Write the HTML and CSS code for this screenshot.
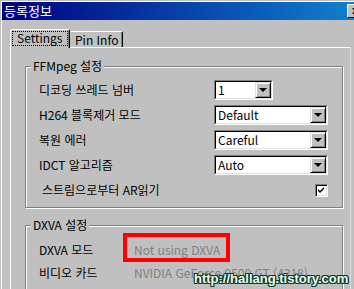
FILE: index.html
```html
<!DOCTYPE html>
<html lang="ko">
<head>
  <meta charset="UTF-8" />
  <title>등록정보</title>
  <link rel="stylesheet" href="styles.css">
</head>
<body>
  <div class="window">
    <div class="titlebar">
      <span class="title">등록정보</span>
      <span class="close">x</span>
    </div>

    <div class="content">
      <div class="tabs">
        <div class="tab active"><span class="focus">Settings</span></div>
        <div class="tab">Pin Info</div>
      </div>

      <div class="panel">
        <fieldset class="group">
          <legend>FFMpeg 설정</legend>
          <div class="rows">
            <div class="label">디코딩 쓰레드 넘버</div>
            <div class="combo short"><div class="combo-in"><span class="val">1</span><span class="drop"></span></div></div>

            <div class="label">H264 블록제거 모드</div>
            <div class="combo"><div class="combo-in"><span class="val">Default</span><span class="drop"></span></div></div>

            <div class="label">복원 에러</div>
            <div class="combo"><div class="combo-in"><span class="val">Careful</span><span class="drop"></span></div></div>

            <div class="label">IDCT 알고리즘</div>
            <div class="combo"><div class="combo-in"><span class="val">Auto</span><span class="drop"></span></div></div>

            <div class="label indent">스트림으로부터 AR읽기</div>
            <div class="check">
              <svg width="7" height="7" viewBox="0 0 7 7"><path d="M0 2 L2 4 L6 0 L6 2 L2 6 L0 4 Z" fill="#000"/></svg>
            </div>
          </div>
        </fieldset>

        <fieldset class="group dxva">
          <legend>DXVA 설정</legend>
          <div class="rows info">
            <div class="label">DXVA 모드</div>
            <div class="value">Not using DXVA</div>
            <div class="label">비디오 카드</div>
            <div class="value">NVIDIA GeForce 9500 GT (4318)</div>
          </div>
        </fieldset>
      </div>
    </div>
  </div>

  <!-- annotation overlays -->
  <div class="mark"></div>
  <div class="watermark">http://hallang.tistory.com</div>
</body>
</html>
```

FILE: styles.css
```css
html, body {
  margin: 0;
  padding: 0;
  background: #c0c0c0;
  width: 354px;
  height: 289px;
  overflow: hidden;
  font-family: "Noto Sans CJK KR", "Liberation Sans", sans-serif;
  font-size: 12px;
  color: #000;
}

.window {
  margin: 1px 0 0 1px;
  width: 363px;
  border-left: 1px solid #fff;
  border-top: 1px solid #fff;
}

.titlebar {
  display: flex;
  align-items: center;
  height: 18px;
  padding-left: 2px;
  background: linear-gradient(to right, #000080, #1084d0);
}

.title {
  color: #fff;
  font-size: 13px;
  line-height: 18px;
}

.close {
  margin-left: auto;
  margin-right: 2px;
  width: 14px;
  height: 12px;
  background: #c0c0c0;
  border: 1px solid;
  border-color: #fff #000 #000 #fff;
  font: bold 11px/11px "Liberation Sans", sans-serif;
  text-align: center;
}

.content {
  padding: 9px 0 0 8px;
}

.tabs {
  display: flex;
  align-items: flex-end;
  height: 18px;
}

.tab {
  box-sizing: border-box;
  width: 53px;
  height: 16px;
  padding: 0 0 0 5px;
  line-height: 15px;
  white-space: nowrap;
  border-top: 1px solid #fff;
  border-right: 1px solid #000;
  border-radius: 2px 2px 0 0;
  box-shadow: inset -1px 0 0 #808080;
}

.tab.active {
  position: relative;
  z-index: 1;
  width: 60px;
  height: 19px;
  margin-bottom: -1px;
  padding: 1px 1px 0 1px;
  border-left: 1px solid #fff;
  background: #c0c0c0;
}

.focus {
  display: block;
  height: 15px;
  line-height: 14px;
  padding-left: 5px;
  outline: 1px dotted #000;
  outline-offset: -1px;
}

.panel {
  width: 341px;
  height: 242px;
  overflow: hidden;
  padding: 11px 0 0 14px;
  border-top: 1px solid #fff;
  border-left: 1px solid #fff;
  border-right: 1px solid #dcdcdc;
  box-sizing: border-box;
}

.group {
  margin: 0;
  width: 318px;
  box-sizing: border-box;
  padding: 7px 0 7px 5px;
  border: 1px solid #808080;
  box-shadow: 1px 1px 0 #fff, inset 1px 1px 0 #fff;
}

.group legend {
  padding: 0 2px;
  line-height: 14px;
  background: #c0c0c0;
}

.dxva {
  margin-top: 10px;
  padding-top: 8px;
  height: 80px;
}

.rows {
  display: grid;
  grid-template-columns: 175px 114px;
  row-gap: 5px;
  align-items: center;
  padding-left: 8px;
}

.rows.info {
  grid-template-columns: 95px auto;
  row-gap: 3px;
}

.label {
  line-height: 20px;
  white-space: nowrap;
}

.label.indent {
  padding-left: 3px;
}

.value {
  line-height: 20px;
  color: #808080;
  white-space: nowrap;
}

.combo {
  box-sizing: border-box;
  width: 114px;
  height: 20px;
  border: 1px solid;
  border-color: #808080 #fff #fff #808080;
}

.combo.short {
  width: 59px;
}

.combo-in {
  display: flex;
  align-items: center;
  height: 100%;
  box-sizing: border-box;
  border: 1px solid;
  border-color: #000 #dfdfdf #dfdfdf #000;
  background: #fff;
}

.val {
  flex: 1;
  padding-left: 2px;
  line-height: 16px;
}

.drop {
  position: relative;
  box-sizing: border-box;
  width: 16px;
  height: 16px;
  background: #c0c0c0;
  border: 1px solid;
  border-color: #dfdfdf #000 #000 #dfdfdf;
  box-shadow: inset 1px 1px 0 #fff, inset -1px -1px 0 #808080;
}

.drop::after {
  content: "";
  position: absolute;
  left: 3px;
  top: 5px;
  border-left: 4px solid transparent;
  border-right: 4px solid transparent;
  border-top: 4px solid #000;
}

.check {
  justify-self: end;
  display: flex;
  align-items: center;
  justify-content: center;
  box-sizing: border-box;
  width: 13px;
  height: 13px;
  background: #fff;
  border: 1px solid;
  border-color: #808080 #fff #fff #808080;
  box-shadow: inset 1px 1px 0 #000, inset -1px -1px 0 #dfdfdf;
}

.mark {
  position: absolute;
  left: 123px;
  top: 233px;
  width: 99px;
  height: 21px;
  border: 4px solid #ff0000;
}

.watermark {
  position: absolute;
  left: 194px;
  top: 270px;
  font: bold 13px/17px "Liberation Sans", sans-serif;
  color: #eefff2;
  text-shadow:
    1px 0 0 #0b3a28, -1px 0 0 #0b3a28, 0 1px 0 #0b3a28, 0 -1px 0 #0b3a28,
    1px 1px 0 #0b3a28, -1px -1px 0 #0b3a28, 1px -1px 0 #0b3a28, -1px 1px 0 #0b3a28;
}
```
